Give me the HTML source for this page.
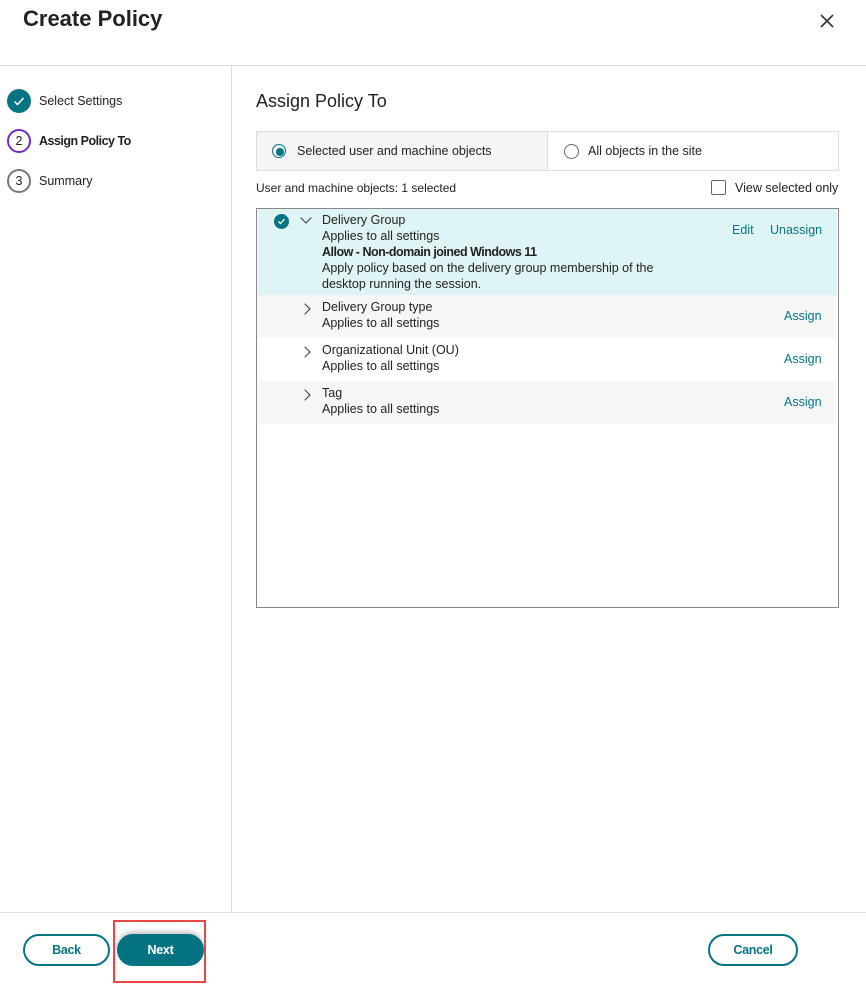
<!DOCTYPE html>
<html><head><style>
body{margin:0;width:866px;height:984px;background:#fff;font-family:"Liberation Sans",sans-serif;color:#222;position:relative;overflow:hidden;font-size:12.5px}
.a{position:absolute}
.t{color:#067383}
b{letter-spacing:-0.5px}
.btn{position:absolute;top:934px;height:28px;border:2px solid #067383;border-radius:16px;text-align:center;line-height:28px;font-weight:bold;font-size:12.5px;color:#067383;box-sizing:content-box;letter-spacing:-0.3px}
.row{position:absolute;left:1px;right:1px}
.chev{position:absolute;width:7px;height:7px;border-right:1.5px solid #333;border-bottom:1.5px solid #333}
</style></head><body>
<div class="a" style="left:23px;top:6px;font-size:22px;font-weight:bold;color:#222">Create Policy</div>
<svg class="a" style="left:819px;top:13px" width="16" height="16"><path d="M2 2L14 14M14 2L2 14" stroke="#333" stroke-width="1.6"/></svg>
<div class="a" style="left:0;top:65px;width:866px;height:1px;background:#ddd"></div>
<div class="a" style="left:231px;top:66px;width:1px;height:846px;background:#ddd"></div>
<div class="a" style="left:0;top:912px;width:866px;height:1px;background:#ddd"></div>

<div class="a" style="left:7px;top:89px;width:24px;height:24px;border-radius:50%;background:#067383"></div>
<svg class="a" style="left:7px;top:89px" width="24" height="24"><path d="M7.5 12.5l3 3 6-6.5" stroke="#fff" stroke-width="1.5" fill="none"/></svg>
<div class="a" style="left:39px;top:94px">Select Settings</div>
<div class="a" style="left:7px;top:129px;width:20px;height:20px;border:2px solid #6f2dbd;border-radius:50%;text-align:center;line-height:20px">2</div>
<div class="a" style="left:39px;top:134px"><b>Assign Policy To</b></div>
<div class="a" style="left:7px;top:169px;width:20px;height:20px;border:2px solid #777;border-radius:50%;text-align:center;line-height:20px">3</div>
<div class="a" style="left:39px;top:174px">Summary</div>

<div class="a" style="left:256px;top:91px;font-size:18px">Assign Policy To</div>
<div class="a" style="left:256px;top:131px;width:581px;height:38px;border:1px solid #ddd"></div>
<div class="a" style="left:257px;top:132px;width:290px;height:38px;background:#f5f5f5;border-right:1px solid #ddd"></div>
<div class="a" style="left:272px;top:144px;width:12px;height:12px;border:1.5px solid #067383;border-radius:50%"></div>
<div class="a" style="left:275.5px;top:147.5px;width:8px;height:8px;background:#067383;border-radius:50%"></div>
<div class="a" style="left:297px;top:144px">Selected user and machine objects</div>
<div class="a" style="left:564px;top:144px;width:13px;height:13px;border:1.3px solid #666;border-radius:50%"></div>
<div class="a" style="left:588px;top:144px">All objects in the site</div>

<div class="a" style="left:256px;top:181px;font-size:12px">User and machine objects: 1 selected</div>
<div class="a" style="left:711px;top:180px;width:13px;height:13px;border:1.3px solid #666;border-radius:2px"></div>
<div class="a" style="left:735px;top:181px">View selected only</div>

<div class="a" style="left:256px;top:208px;width:581px;height:398px;border:1px solid #888">
 <div class="row" style="top:0;height:86px;background:#dff4f5"></div>
 <div class="row" style="top:86px;height:43px;background:#f6f6f6"></div>
 <div class="row" style="top:172px;height:43px;background:#f6f6f6"></div>
</div>
<div class="a" style="left:274px;top:214px;width:15px;height:15px;border-radius:50%;background:#067383"></div>
<svg class="a" style="left:274px;top:214px" width="15" height="15"><path d="M4.5 7.5l2 2 4-4.5" stroke="#fff" stroke-width="1.3" fill="none"/></svg>
<div class="chev" style="left:302px;top:214px;transform:rotate(45deg)"></div>
<div class="a" style="left:322px;top:212px;line-height:16px">Delivery Group<br>Applies to all settings<br><b>Allow - Non-domain joined Windows 11</b><br>Apply policy based on the delivery group membership of the<br>desktop running the session.</div>
<div class="a t" style="left:732px;top:223px">Edit</div>
<div class="a t" style="left:770px;top:223px">Unassign</div>

<div class="chev" style="left:301px;top:305px;transform:rotate(-45deg)"></div>
<div class="a" style="left:322px;top:299px;line-height:16px">Delivery Group type<br>Applies to all settings</div>
<div class="a t" style="left:784px;top:309px">Assign</div>
<div class="chev" style="left:301px;top:348px;transform:rotate(-45deg)"></div>
<div class="a" style="left:322px;top:342px;line-height:16px">Organizational Unit (OU)<br>Applies to all settings</div>
<div class="a t" style="left:784px;top:352px">Assign</div>
<div class="chev" style="left:301px;top:391px;transform:rotate(-45deg)"></div>
<div class="a" style="left:322px;top:385px;line-height:16px">Tag<br>Applies to all settings</div>
<div class="a t" style="left:784px;top:395px">Assign</div>

<div class="btn" style="left:23px;width:83px">Back</div>
<div class="btn" style="left:117px;width:83px;background:#067383;color:#fff;box-shadow:0 -3px 4px rgba(0,0,0,0.2)">Next</div>
<div class="a" style="left:113px;top:920px;width:89px;height:59px;border:2px solid #e84545"></div>
<div class="btn" style="left:708px;width:86px">Cancel</div>
</body></html>
